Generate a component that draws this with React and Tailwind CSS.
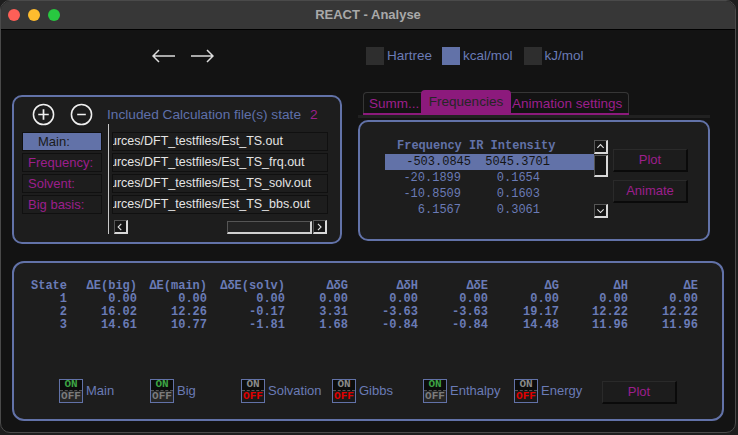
import React from "react";

const files = [
  { label: "Main:", file: "urces/DFT_testfiles/Est_TS.out", active: true },
  { label: "Frequency:", file: "urces/DFT_testfiles/Est_TS_frq.out" },
  { label: "Solvent:", file: "urces/DFT_testfiles/Est_TS_solv.out" },
  { label: "Big basis:", file: "urces/DFT_testfiles/Est_TS_bbs.out" },
];

const freqs = [
  ["-20.1899", "0.1654"],
  ["-10.8509", "0.1603"],
  ["6.1567", "0.3061"],
];

const header = ["State", "ΔE(big)", "ΔE(main)", "ΔδE(solv)", "ΔδG", "ΔδH", "ΔδE", "ΔG", "ΔH", "ΔE"];
const rows = [
  ["1", "0.00", "0.00", "0.00", "0.00", "0.00", "0.00", "0.00", "0.00", "0.00"],
  ["2", "16.02", "12.26", "-0.17", "3.31", "-3.63", "-3.63", "19.17", "12.22", "12.22"],
  ["3", "14.61", "10.77", "-1.81", "1.68", "-0.84", "-0.84", "14.48", "11.96", "11.96"],
];

const toggles = [
  { label: "Main", on: true },
  { label: "Big", on: true },
  { label: "Solvation", on: false },
  { label: "Gibbs", on: false },
  { label: "Enthalpy", on: true },
  { label: "Energy", on: false },
];

function ScrollBtn({ dir }) {
  const d = {
    up: "M3 8 L7 4 L11 8",
    down: "M3 5 L7 9 L11 5",
    left: "M8 3 L4 7 L8 11",
    right: "M5 3 L9 7 L5 11",
  }[dir];
  return (
    <div className="w-[14px] h-[14px] bg-[#151515] border-t border-l border-[#555] border-r-2 border-b-2 border-r-[#d8d8d8] border-b-[#d8d8d8] flex items-center justify-center">
      <svg width="12" height="12" viewBox="0 0 14 14">
        <path d={d} fill="none" stroke="#e0e0e0" strokeWidth="1.4" />
      </svg>
    </div>
  );
}

function Toggle({ on, label }) {
  return (
    <div className="flex items-center w-[91px]">
      <div className="w-[24px] h-[24px] border border-[#6272a8] flex flex-col font-['Liberation_Mono'] text-[11px] font-bold leading-none">
        <div
          className={`h-[11px] flex items-center justify-center bg-[#0c0c0c] border-b border-dashed border-[#555] ${on ? "text-[#3da444]" : "text-[#8a8a8a]"}`}
        >
          ON
        </div>
        <div
          className={`flex-1 flex items-center justify-center ${on ? "bg-[#262626] text-[#7c7c7c]" : "bg-[#1a1a1a] text-[#e00000]"}`}
        >
          OFF
        </div>
      </div>
      <span className="ml-[3px] text-[13px] text-[#6a7bb6]">{label}</span>
    </div>
  );
}

function DarkButton({ children, className = "" }) {
  return (
    <div
      className={`w-[75px] h-[23px] bg-[#1c1c1c] border border-[#2a2a2a] border-r-[#0a0a0a] border-b-[#0a0a0a] border-r-2 border-b-2 flex items-center justify-center text-[13px] text-[#9c1f8c] ${className}`}
    >
      {children}
    </div>
  );
}

export default function App() {
  return (
    <div className="w-[738px] h-[435px] bg-[#1e1e1e] font-['Liberation_Sans',sans-serif] overflow-hidden">
      <div className="w-[736px] h-[433px] rounded-[10px] border border-[#4a4a4a] bg-[#131313] overflow-hidden flex flex-col">
        {/* title bar */}
        <div className="h-[29px] shrink-0 bg-[#373737] border-b border-black flex items-center relative">
          <div className="flex gap-[8px] pl-[7px]">
            <div className="w-[12px] h-[12px] rounded-full bg-[#fe5f57]" />
            <div className="w-[12px] h-[12px] rounded-full bg-[#febc2e]" />
            <div className="w-[12px] h-[12px] rounded-full bg-[#28c840]" />
          </div>
          <div className="absolute inset-0 flex items-center justify-center text-[13px] font-bold text-[#a9a9a9]">
            REACT - Analyse
          </div>
        </div>

        <div className="px-[11px] flex flex-col">
          {/* top row */}
          <div className="h-[60px] flex items-start">
            <div className="flex gap-[14px] ml-[140px] mt-[19px]">
              <svg width="24" height="14" viewBox="0 0 24 14">
                <path d="M1 7 H23 M7 1 L1 7 L7 13" fill="none" stroke="#dcdcdc" strokeWidth="1.5" />
              </svg>
              <svg width="24" height="14" viewBox="0 0 24 14">
                <path d="M1 7 H23 M17 1 L23 7 L17 13" fill="none" stroke="#dcdcdc" strokeWidth="1.5" />
              </svg>
            </div>
            <div className="flex items-center ml-[152px] mt-[16px] text-[13.5px] text-[#6a7bb6]">
              <div className="w-[18px] h-[18px] bg-[#2e2e2e]" />
              <span className="ml-[3px]">Hartree</span>
              <div className="w-[18px] h-[18px] bg-[#6272a8] ml-[10px]" />
              <span className="ml-[3px]">kcal/mol</span>
              <div className="w-[18px] h-[18px] bg-[#2e2e2e] ml-[11px]" />
              <span className="ml-[3px]">kJ/mol</span>
            </div>
          </div>

          {/* middle row */}
          <div className="flex">
            {/* files panel */}
            <div className="mt-[5px] w-[330px] h-[149px] rounded-[10px] border-2 border-[#6272a8] bg-[#1d1d1d] flex flex-col">
              <div className="h-[33px] flex items-center">
                <svg width="23" height="23" viewBox="0 0 24 24" className="ml-[18px] mt-[1px]">
                  <circle cx="12" cy="12" r="10.5" fill="none" stroke="#f0f0f0" strokeWidth="1.6" />
                  <path d="M6.5 12 H17.5 M12 6.5 V17.5" stroke="#f0f0f0" strokeWidth="1.8" />
                </svg>
                <svg width="23" height="23" viewBox="0 0 24 24" className="ml-[15px] mt-[1px]">
                  <circle cx="12" cy="12" r="10.5" fill="none" stroke="#f0f0f0" strokeWidth="1.6" />
                  <path d="M7.5 12 H16.5" stroke="#f0f0f0" strokeWidth="1.8" />
                </svg>
                <span className="ml-[14px] text-[13.7px] text-[#5f70aa] mt-[3px]">
                  Included Calculation file(s) state
                </span>
                <span className="ml-[9px] text-[13.7px] text-[#9c1f8c] mt-[3px]">2</span>
              </div>
              <div className="flex">
                <div className="ml-[8px] mt-[2px] w-[80px] flex flex-col gap-[2px]">
                  {files.map((f) => (
                    <div
                      key={f.label}
                      className={`h-[19px] flex items-center text-[13px] border border-[#101010] ${f.active ? "bg-[#6272a8] text-[#1a1a1a] pl-[15px]" : "bg-[#1d1d1d] text-[#9c1f8c] pl-[5px]"}`}
                    >
                      {f.label}
                    </div>
                  ))}
                </div>
                <div className="ml-[6px] mt-[-6px] w-[1px] h-[110px] bg-[#c8c8c8]" />
                <div className="ml-[3px] flex flex-col">
                  <div className="mt-[2px] flex flex-col gap-[2px]">
                    {files.map((f) => (
                      <div
                        key={f.file}
                        className="w-[216px] h-[19px] flex items-center overflow-hidden border border-[#101010] text-[12.5px] text-[#e4e4e4] whitespace-nowrap"
                      >
                        <span className="ml-[-3px]">{f.file}</span>
                      </div>
                    ))}
                  </div>
                  <div className="mt-[6px] ml-[2px] flex items-center w-[213px]">
                    <ScrollBtn dir="left" />
                    <div className="ml-auto w-[85px] h-[13px] bg-[#232323] border border-[#555] border-r-2 border-b-2 border-r-[#d0d0d0] border-b-[#d0d0d0]" />
                    <div className="ml-[1px]">
                      <ScrollBtn dir="right" />
                    </div>
                  </div>
                </div>
              </div>
            </div>

            {/* frequencies side */}
            <div className="ml-[16px] flex flex-col">
              <div className="ml-[5px] h-[25px] w-[266px] flex items-end relative">
                <div className="h-[23px] w-full rounded-t-[4px] border border-b-0 border-[#363636] flex items-stretch text-[13.5px]">
                  <div className="w-[57px] flex items-center pl-[5px] text-[#9c1f8c]">Summ...</div>
                  <div className="w-[90px] mt-[-3px] rounded-t-[4px] bg-[#8c1a7c] flex items-center justify-center text-[#262626]">
                    Frequencies
                  </div>
                  <div className="flex items-center pl-[1px] text-[#9c1f8c] whitespace-nowrap">Animation settings</div>
                </div>
                <div className="absolute left-0 right-0 bottom-0 h-[2px] bg-[#8c1a7c]" />
              </div>
              <div className="h-[3px] w-[352px] bg-[#212121]" />
              <div className="mt-[2px] w-[352px] h-[121px] rounded-[10px] border-2 border-[#6272a8] bg-[#1d1d1d] flex">
                <div className="ml-[25px] mt-[16px] w-[209px] flex flex-col font-['Liberation_Mono',monospace] text-[12px] leading-[16px]">
                  <div className="h-[16px] pl-[12px] text-[#6272a8] font-bold whitespace-pre">Frequency IR Intensity</div>
                  <div className="h-[16px] bg-[#6272a8] text-[#141414] flex">
                    <span className="w-[86px] text-right">-503.0845</span>
                    <span className="w-[79px] text-right">5045.3701</span>
                  </div>
                  {freqs.map((r) => (
                    <div key={r[0]} className="h-[16px] text-[#6a7bb6] flex">
                      <span className="w-[76px] text-right">{r[0]}</span>
                      <span className="w-[79px] text-right">{r[1]}</span>
                    </div>
                  ))}
                </div>
                <div className="mt-[18px] flex flex-col">
                  <ScrollBtn dir="up" />
                  <div className="mt-[1px] w-[14px] h-[22px] bg-[#151515] border-t border-l border-[#555] border-r-2 border-b-2 border-r-[#d8d8d8] border-b-[#d8d8d8]" />
                  <div className="mt-[27px]">
                    <ScrollBtn dir="down" />
                  </div>
                </div>
                <div className="ml-[5px] mt-[27px] flex flex-col gap-[8px]">
                  <DarkButton>Plot</DarkButton>
                  <DarkButton>Animate</DarkButton>
                </div>
              </div>
            </div>
          </div>

          {/* bottom panel */}
          <div className="mt-[17px] w-[712px] h-[160px] rounded-[12px] border-2 border-[#6272a8] bg-[#1d1d1d] flex flex-col">
            <div className="ml-[15px] mt-[17px] grid grid-cols-[38px_70px_70px_78px_63px_70px_70px_71px_69px_70px] font-['Liberation_Mono',monospace] font-bold text-[12px] leading-[13px] text-[#6a7bb6]">
              {header.map((h) => (
                <div key={h} className="text-right whitespace-nowrap">
                  {h}
                </div>
              ))}
              {rows.map((r) =>
                r.map((c, i) => (
                  <div key={r[0] + "-" + i} className="text-right">
                    {c}
                  </div>
                ))
              )}
            </div>
            <div className="ml-[45px] mt-[45px] flex items-center">
              {toggles.map((t) => (
                <Toggle key={t.label} on={t.on} label={t.label} />
              ))}
              <DarkButton className="ml-[-3px] mt-[4px]">Plot</DarkButton>
            </div>
          </div>
        </div>
      </div>
    </div>
  );
}
